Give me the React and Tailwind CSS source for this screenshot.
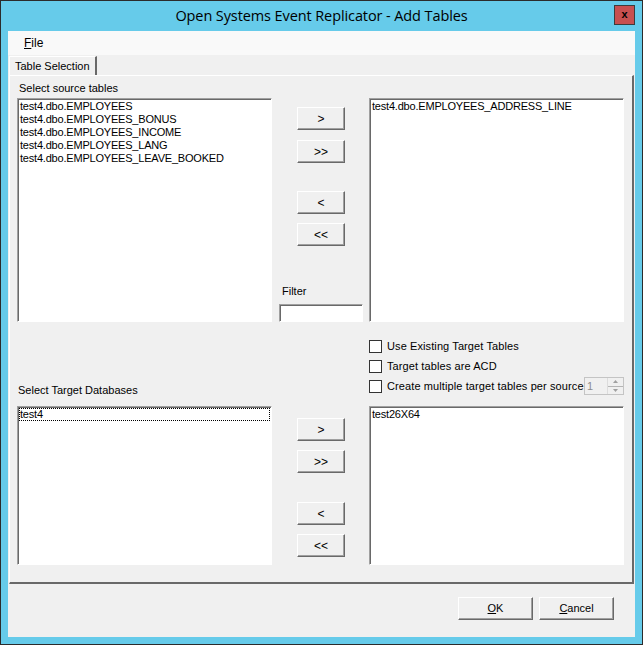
import React from 'react';

const sunken = 'bg-white border-t border-l border-[#a0a0a0] border-r border-b border-r-white border-b-white shadow-[inset_1px_1px_0_#696969]';
const raised = 'bg-[#f0f0f0] border-t border-l border-white border-r border-b border-r-[#696969] border-b-[#696969] shadow-[inset_-1px_-1px_0_#a0a0a0]';

function Btn({ children, className = '' }) {
  return (
    <div className={`${raised} w-[48px] h-[23px] flex items-center justify-center text-[12px] text-black ${className}`}>
      {children}
    </div>
  );
}

function ListBox({ items, className = '', focused }) {
  return (
    <div className={`${sunken} w-[255px] ${className} pl-[1px] pt-[1px] overflow-hidden`}>
      {items.map((it, i) => (
        <div
          key={it}
          className={`h-[13px] leading-[13px] text-[11px] tracking-[-0.2px] text-black whitespace-nowrap pl-[1px] ${focused && i === 0 ? 'outline outline-1 outline-dotted outline-black -outline-offset-1 mr-[1px]' : ''}`}
        >
          {it}
        </div>
      ))}
    </div>
  );
}

function Check({ label, children }) {
  return (
    <div className="h-[20px] flex items-center">
      <div className="w-[13px] h-[13px] border border-[#333] bg-white shrink-0" />
      <span className="ml-[5px] text-[11px] tracking-[0.1px] text-black whitespace-nowrap">{label}</span>
      {children}
    </div>
  );
}

export default function App() {
  const source = [
    'test4.dbo.EMPLOYEES',
    'test4.dbo.EMPLOYEES_BONUS',
    'test4.dbo.EMPLOYEES_INCOME',
    'test4.dbo.EMPLOYEES_LANG',
    'test4.dbo.EMPLOYEES_LEAVE_BOOKED',
  ];

  return (
    <div className="w-[643px] h-[645px] bg-[#66cbea] border border-[#2b2b2b] flex flex-col font-['Liberation_Sans',Arial,sans-serif]">
      {/* title bar */}
      <div className="h-[30px] relative flex items-center justify-center shrink-0">
        <span className="text-[14.5px] text-black font-['Open_Sans',sans-serif] tracking-[-0.1px]">
          Open Systems Event Replicator - Add Tables
        </span>
        <div className="absolute right-[7px] top-[4px] w-[21px] h-[20px] bg-[#c75050] border border-[#3c3c3c] flex items-center justify-center text-[11px] font-bold text-black leading-none pb-[1px]">
          x
        </div>
      </div>

      {/* client */}
      <div className="mx-[7px] mb-[7px] flex-1 bg-[#f0f0f0] flex flex-col">
        <div className="h-[24px] bg-[#f9f9f9] flex items-center pl-[16px] text-[12px] text-black">
          <span><span className="underline">F</span>ile</span>
        </div>

        <div className="h-[20px] flex items-end">
          <div className="ml-[1px] w-[88px] h-[19px] border-t border-l border-white border-r-2 border-r-[#696969] bg-[#f0f0f0] flex items-center pl-[5px] text-[11px] text-black">
            Table Selection
          </div>
        </div>

        {/* tab page */}
        <div className="ml-[1px] w-[625px] h-[509px] border-t border-l border-white border-r-2 border-b-2 border-r-[#696969] border-b-[#696969] flex flex-col">
          {/* top row */}
          <div className="h-[246px] flex">
            <div className="ml-[7px] w-[255px]">
              <div className="mt-[6px] h-[13px] leading-[13px] text-[11px] text-black pl-[2px]">Select source tables</div>
              <ListBox items={source} className="mt-[3px] h-[224px]" />
            </div>
            <div className="w-[97px] flex flex-col">
              <div className="pt-[31px] pl-[25px]">
                <Btn>&gt;</Btn>
                <Btn className="mt-[10px]">&gt;&gt;</Btn>
                <Btn className="mt-[28px]">&lt;</Btn>
                <Btn className="mt-[9px]">&lt;&lt;</Btn>
              </div>
              <div className="mt-auto pl-[7px]">
                <div className="h-[13px] leading-[13px] text-[11px] text-black pl-[3px]">Filter</div>
                <div className={`${sunken} mt-[6px] w-[84px] h-[18px]`} />
              </div>
            </div>
            <div className="w-[255px] pt-[22px]">
              <ListBox items={['test4.dbo.EMPLOYEES_ADDRESS_LINE']} className="h-[224px]" />
            </div>
          </div>

          {/* middle row */}
          <div className="h-[84px] flex">
            <div className="ml-[7px] w-[255px] flex flex-col justify-end pb-[9px]">
              <div className="h-[13px] leading-[13px] text-[11px] text-black pl-[1px]">Select Target Databases</div>
            </div>
            <div className="w-[97px]" />
            <div className="w-[255px] pt-[14px]">
              <Check label="Use Existing Target Tables" />
              <Check label="Target tables are ACD" />
              <Check label="Create multiple target tables per source">
                <div className="ml-auto w-[40px] h-[18px] border border-[#c4c4c4] bg-[#f0f0f0] flex">
                  <div className="flex-1 text-[11px] text-[#8d8d8d] leading-[16px] pl-[2px]">1</div>
                  <div className="w-[16px] flex flex-col border-l border-[#dcdcdc]">
                    <div className="flex-1 flex items-center justify-center border-b border-[#b5b5b5]">
                      <svg width="5" height="3" viewBox="0 0 5 3"><path d="M2.5 0 L5 3 L0 3 Z" fill="#a0a0a0" /></svg>
                    </div>
                    <div className="flex-1 flex items-center justify-center">
                      <svg width="5" height="3" viewBox="0 0 5 3"><path d="M0 0 L5 0 L2.5 3 Z" fill="#a0a0a0" /></svg>
                    </div>
                  </div>
                </div>
              </Check>
            </div>
          </div>

          {/* bottom row */}
          <div className="h-[159px] flex">
            <div className="ml-[7px] w-[255px]">
              <ListBox items={['test4']} className="h-[159px]" focused />
            </div>
            <div className="w-[97px] pt-[12px] pl-[25px]">
              <Btn>&gt;</Btn>
              <Btn className="mt-[9px]">&gt;&gt;</Btn>
              <Btn className="mt-[29px]">&lt;</Btn>
              <Btn className="mt-[9px]">&lt;&lt;</Btn>
            </div>
            <div className="w-[255px]">
              <ListBox items={['test26X64']} className="h-[159px]" />
            </div>
          </div>
        </div>

        {/* dialog buttons */}
        <div className="flex justify-end gap-[6px] pr-[21px] pt-[13px]">
          <div className={`${raised} w-[75px] h-[23px] flex items-center justify-center text-[11px] text-black`}>
            <span><span className="underline">O</span>K</span>
          </div>
          <div className={`${raised} w-[75px] h-[23px] flex items-center justify-center text-[11px] text-black`}>
            <span><span className="underline">C</span>ancel</span>
          </div>
        </div>
      </div>
    </div>
  );
}
